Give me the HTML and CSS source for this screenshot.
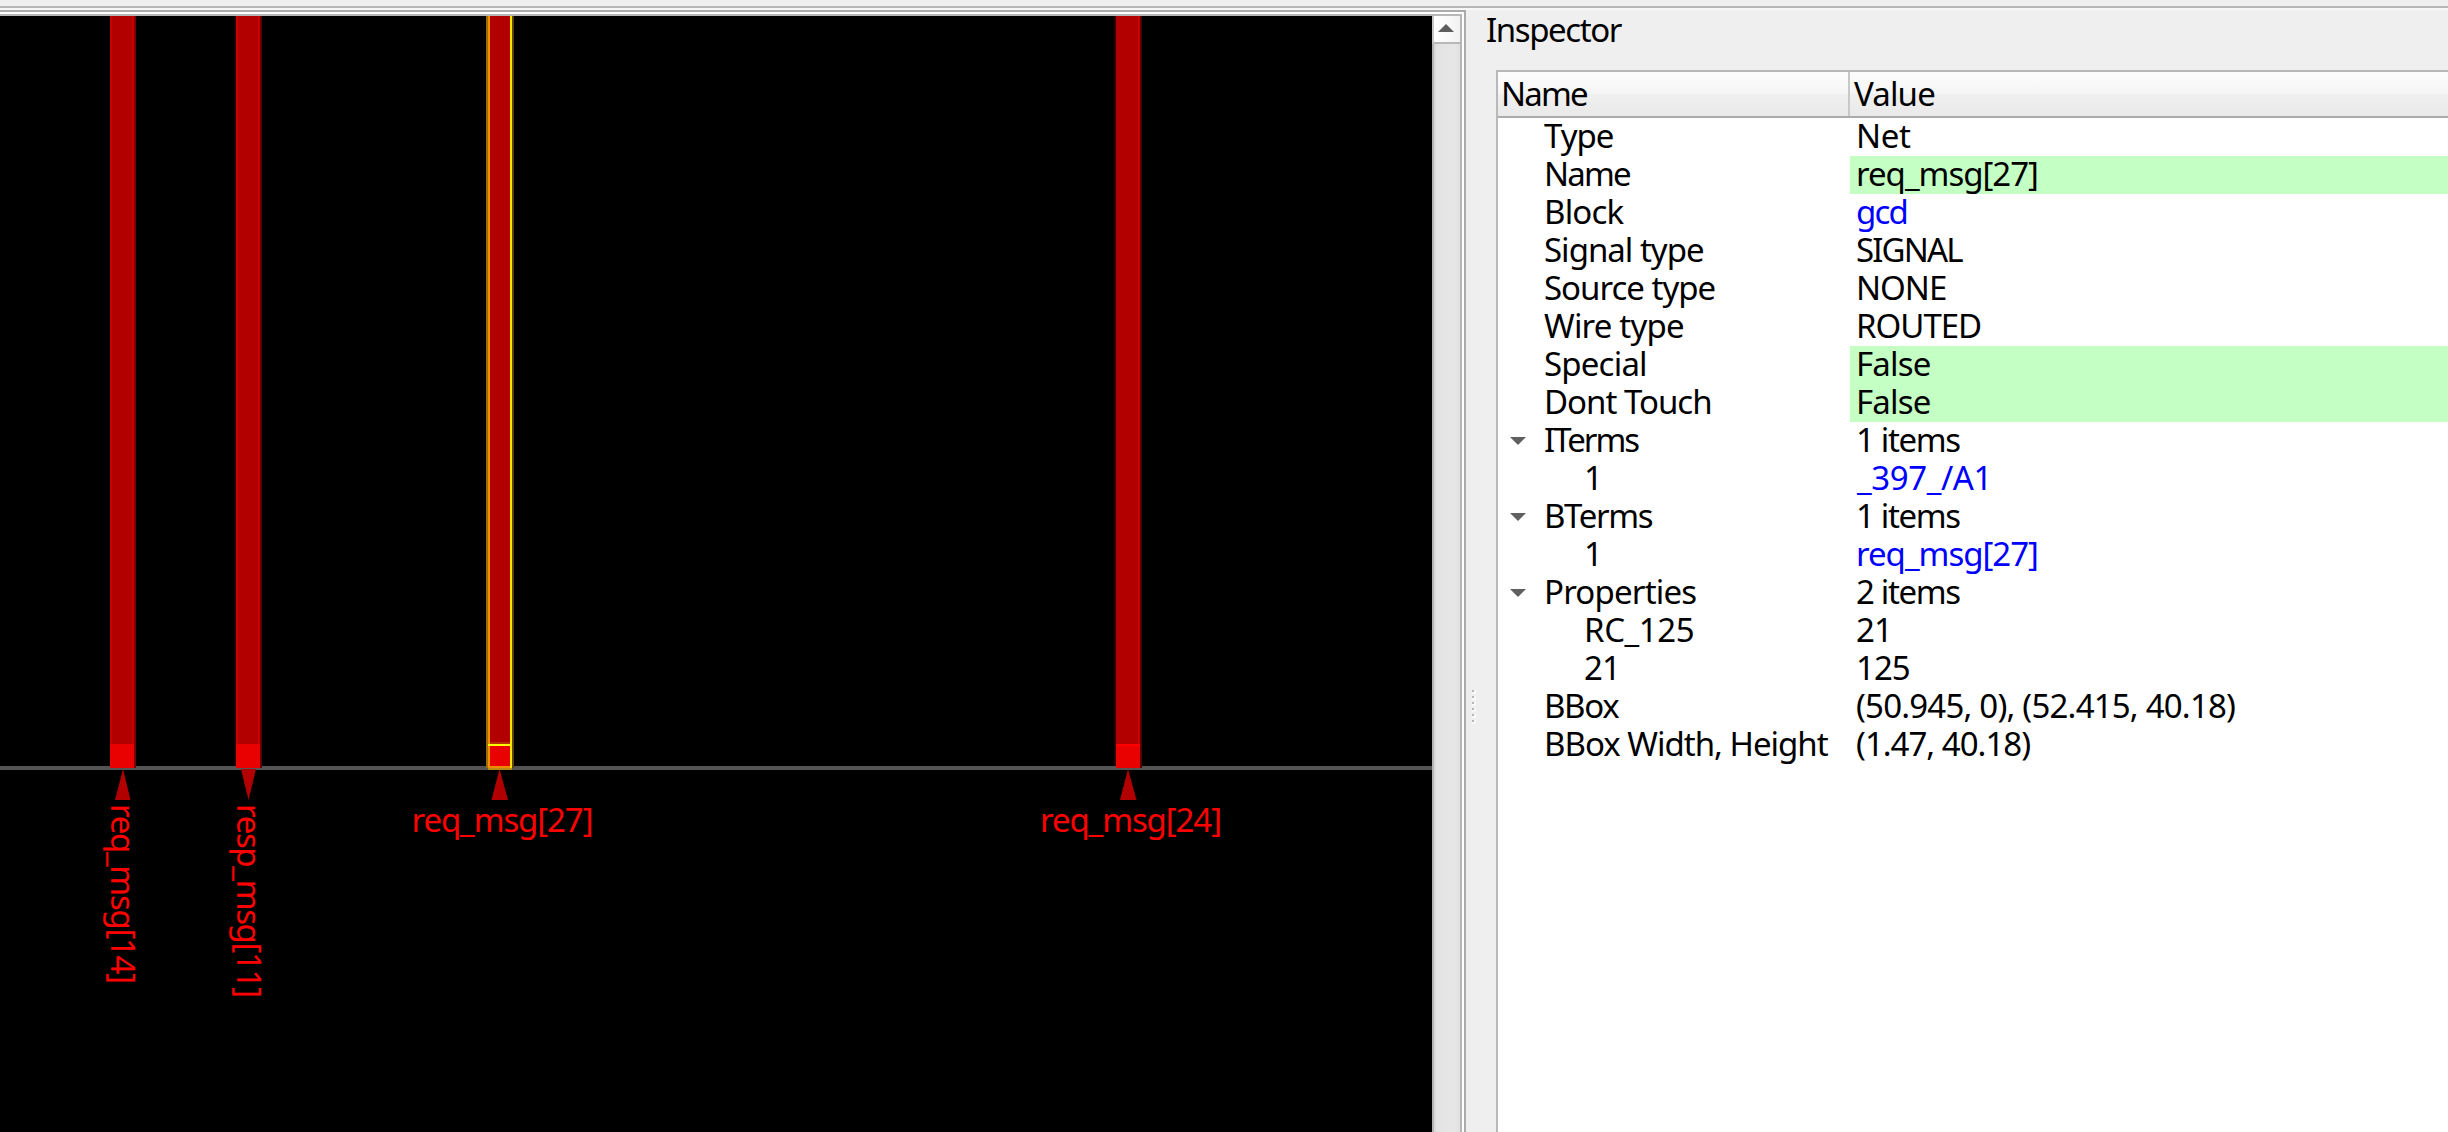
FILE: index.html
```html
<!DOCTYPE html>
<html lang="en">
<head>
<meta charset="utf-8">
<title>Inspector</title>
<link rel="stylesheet" href="styles.css">
</head>
<body>
<div class="toolbar-edge"></div>
<main class="workspace">
  <section class="viewer">
    <div class="viewer-inner">
      <svg class="layout" width="1432" height="1116" viewBox="0 16 1432 1116" shape-rendering="crispEdges">
        <rect y="766" width="1432" height="4" fill="#545454"/>
        <g>
          <rect x="110" y="16" width="24" height="728" fill="#c80000"/>
          <rect x="112" y="16" width="20" height="728" fill="#b20000"/>
          <rect x="134" y="16" width="2" height="752" fill="#780000"/>
          <rect x="110" y="744" width="24" height="24" fill="#e90000"/>
        </g>
        <g>
          <rect x="234" y="16" width="2" height="750" fill="#1c0000"/>
          <rect x="236" y="16" width="24" height="728" fill="#c80000"/>
          <rect x="238" y="16" width="20" height="728" fill="#b20000"/>
          <rect x="260" y="16" width="2" height="752" fill="#5c0000"/>
          <rect x="236" y="744" width="24" height="24" fill="#e90000"/>
        </g>
        <g>
          <rect x="486" y="16" width="2" height="752" fill="#a06c00"/>
          <rect x="488" y="16" width="2" height="752" fill="#ee9200"/>
          <rect x="490" y="16" width="20" height="726" fill="#b20000"/>
          <rect x="490" y="742" width="20" height="2" fill="#b43200"/>
          <rect x="488" y="744" width="22" height="2" fill="#ffff00"/>
          <rect x="490" y="746" width="20" height="20" fill="#e90000"/>
          <rect x="490" y="766" width="20" height="2" fill="#f28a00"/>
          <rect x="488" y="768" width="24" height="2" fill="#b98a18"/>
          <rect x="510" y="16" width="2" height="752" fill="#ffe600"/>
          <rect x="512" y="16" width="2" height="752" fill="#5a4200"/>
        </g>
        <g>
          <rect x="1114" y="16" width="2" height="750" fill="#2c0000"/>
          <rect x="1116" y="16" width="24" height="728" fill="#b20000"/>
          <rect x="1138" y="16" width="2" height="728" fill="#c80000"/>
          <rect x="1140" y="16" width="2" height="752" fill="#500000"/>
          <rect x="1116" y="744" width="24" height="24" fill="#e90000"/>
          <rect x="1116" y="744" width="24" height="2" fill="#ff0000"/>
        </g>
        <g class="pins" shape-rendering="auto">
          <path d="M123 769L130.500 800H115Z"/>
          <path d="M241 769H256L248.500 800Z"/>
          <path d="M499.500 769L508 800H491.500Z"/>
          <path d="M1128 769L1136.500 800H1120Z"/>
        </g>
        <g class="labels">
          <text x="411.500" y="832" textLength="182">req_msg[27]</text>
          <text x="1040" y="832" textLength="182">req_msg[24]</text>
          <text transform="translate(110.500 804) rotate(90)" textLength="180">req_msg[14]</text>
          <text transform="translate(236.500 804) rotate(90)" textLength="194">resp_msg[11]</text>
        </g>
      </svg>
      <div class="scrollbar">
        <div class="scroll-up"><svg width="16" height="8" viewBox="0 0 16 8"><path d="M8 0L16 8H0Z" fill="#5c5c5c"/></svg></div>
        <div class="scroll-track"></div>
      </div>
    </div>
  </section>
  <div class="splitter"><i></i><i></i><i></i><i></i><i></i><i></i></div>
  <section class="inspector">
    <h1 class="title">Inspector</h1>
    <div class="tree">
      <div class="row head"><div class="name tightest">Name</div><div class="value">Value</div></div>
      <div class="row"><div class="name">Type</div><div class="value net">Net</div></div>
      <div class="row"><div class="name tightest">Name</div><div class="value editable">req_msg[27]</div></div>
      <div class="row"><div class="name loose">Block</div><div class="value link tightest">gcd</div></div>
      <div class="row"><div class="name">Signal type</div><div class="value tightest">SIGNAL</div></div>
      <div class="row"><div class="name">Source type</div><div class="value">NONE</div></div>
      <div class="row"><div class="name loose">Wire type</div><div class="value">ROUTED</div></div>
      <div class="row"><div class="name loose">Special</div><div class="value editable loose">False</div></div>
      <div class="row"><div class="name">Dont Touch</div><div class="value editable loose">False</div></div>
      <div class="row"><div class="name iterms"><svg class="arrow" viewBox="0 0 16 8"><path d="M0 0H16L8 8Z"/></svg>ITerms</div><div class="value tight">1 items</div></div>
      <div class="row"><div class="name child">1</div><div class="value link under">_397_/A1</div></div>
      <div class="row"><div class="name tight"><svg class="arrow" viewBox="0 0 16 8"><path d="M0 0H16L8 8Z"/></svg>BTerms</div><div class="value tight">1 items</div></div>
      <div class="row"><div class="name child">1</div><div class="value link">req_msg[27]</div></div>
      <div class="row"><div class="name loose"><svg class="arrow" viewBox="0 0 16 8"><path d="M0 0H16L8 8Z"/></svg>Properties</div><div class="value tight">2 items</div></div>
      <div class="row"><div class="name child under">RC_125</div><div class="value">21</div></div>
      <div class="row"><div class="name child">21</div><div class="value">125</div></div>
      <div class="row"><div class="name tight">BBox</div><div class="value loose">(50.945, 0), (52.415, 40.18)</div></div>
      <div class="row"><div class="name">BBox Width, Height</div><div class="value">(1.47, 40.18)</div></div>
    </div>
  </section>
</main>
</body>
</html>
```
FILE: styles.css
```css
* { box-sizing: border-box; }

body {
  margin: 0;
  width: 2448px;
  height: 1132px;
  overflow: hidden;
  display: flex;
  flex-direction: column;
  background: #efefef;
  color: #000;
  font: 33px/36px "Noto Sans", sans-serif;
  letter-spacing: -1px;
}

.toolbar-edge {
  height: 10px;
  flex: none;
  background: linear-gradient(#efefef 6px, #b6b6b6 6px 8px, #f7f7f7 8px);
}

.workspace { flex: 1; display: flex; min-height: 0; }

/* Layout viewer */
.viewer {
  width: 1466px;
  flex: none;
  border: solid #ababab;
  border-width: 2px 2px 0 0;
  padding: 2px 2px 0 0;
  background: #fff;
}
.viewer-inner {
  height: 100%;
  display: flex;
  border: solid #b6b6b6;
  border-width: 2px 2px 0 0;
}
.layout { display: block; flex: none; background: #000; }
.pins { fill: #b20000; }
.labels { fill: #f00; letter-spacing: 0; }

.scrollbar { width: 28px; display: flex; flex-direction: column; }
.scroll-up {
  height: 28px;
  flex: none;
  padding: 8px 0 0 4px;
  border-left: 2px solid #c8c8c8;
  border-bottom: 2px solid #b9b9b9;
  background: linear-gradient(90deg, #fff, #f2f2f2);
}
.scroll-up svg { display: block; }
.scroll-track {
  flex: 1;
  border-left: 2px solid #b4b4b4;
  background: linear-gradient(90deg, #dadada 0 2px, #e3e3e3 2px, #e6e6e6 21px, #e0e0e0);
}

.splitter {
  width: 30px;
  flex: none;
  padding: 680px 0 0 6px;
  display: flex;
  flex-direction: column;
  gap: 2px;
}
.splitter i {
  width: 4px;
  height: 4px;
  background: linear-gradient(#b6b6b6, #b6b6b6) 0 0 / 2px 2px no-repeat #f9f9f9;
}

/* Inspector */
.inspector { flex: 1; display: flex; flex-direction: column; min-width: 0; }
.title {
  height: 60px;
  margin: 0;
  padding-top: 2px;
  font: inherit;
  letter-spacing: -1.4px;
  text-indent: -10px;
}
.tree {
  flex: 1;
  border: solid #b9b9b9;
  border-width: 2px 0 0 2px;
  background: #fff;
}
.row { height: 38px; display: grid; grid-template-columns: 352px 1fr; white-space: pre; }
.name { position: relative; padding-left: 46px; }
.value { padding-left: 6px; }
.child { padding-left: 86px; }
.child.under { letter-spacing: -0.4px; }
.value.under { padding-left: 7px; letter-spacing: -0.4px; }
.net { letter-spacing: -0.4px; }
.editable { background: #c4ffc4; }
.link { color: #00f; }
.loose { letter-spacing: -0.8px; }
.tight { letter-spacing: -1.35px; }
.tightest { letter-spacing: -1.85px; }
.iterms { letter-spacing: -2px; }
.head {
  height: 46px;
  border-bottom: 2px solid #ababab;
  background: linear-gradient(#fdfdfd, #f5f5f5 50%, #f0f0f0 50%, #e9e9e9);
}
.head .name { padding: 4px 0 0 3px; border-right: 2px solid #c8c8c8; }
.head .value { padding: 4px 0 0 4px; letter-spacing: -0.85px; }

.arrow { position: absolute; left: 12px; top: 15px; width: 16px; height: 8px; fill: #606060; }
```
